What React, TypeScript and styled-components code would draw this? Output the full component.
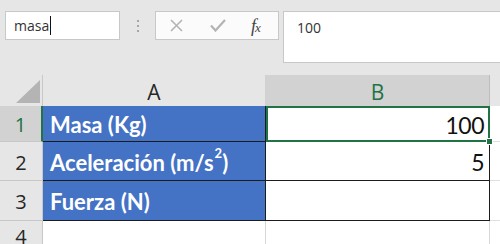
import styled, { createGlobalStyle } from "styled-components";

const GlobalStyle = createGlobalStyle`
	html, body {
		margin: 0;
		padding: 0;
		background: #e6e6e6;
		overflow: hidden;
	}
`;

const Window = styled.div`
	width: 500px;
	height: 244px;
	overflow: hidden;
	background: #e6e6e6;
	font-family: "Open Sans", "Liberation Sans", sans-serif;
	display: flex;
	flex-direction: column;
`;

const Toolbar = styled.div`
	height: 75px;
	flex-shrink: 0;
	box-sizing: border-box;
	padding: 11px 0 0 5px;
	display: flex;
	align-items: flex-start;
`;

const NameBox = styled.div`
	width: 115px;
	height: 29px;
	box-sizing: border-box;
	background: #ffffff;
	border: 1px solid #c8c8c8;
	padding-left: 8px;
	display: flex;
	align-items: center;
	font-size: 14px;
	color: #333333;
`;

const Caret = styled.span`
	display: inline-block;
	width: 1px;
	height: 19px;
	margin-left: 1px;
	background: #111111;
`;

const Grip = styled.div`
	width: 35px;
	height: 29px;
	display: flex;
	flex-direction: column;
	align-items: center;
	justify-content: center;
	gap: 3px;
`;

const Dot = styled.span`
	width: 2px;
	height: 2px;
	background: #a6a6a6;
`;

const ButtonGroup = styled.div`
	width: 124px;
	height: 29px;
	box-sizing: border-box;
	background: #fbfbfb;
	border: 1px solid #c8c8c8;
	display: flex;
	align-items: center;
	padding-left: 14px;
`;

const IconButton = styled.span<{ $w: number }>`
	width: ${(p) => p.$w}px;
	display: flex;
	align-items: center;
`;

const Fx = styled.span`
	font-family: "Liberation Serif", "DejaVu Serif", serif;
	font-style: italic;
	font-size: 18px;
	color: #444444;
	letter-spacing: -1px;
	line-height: 1;

	small {
		font-size: 13px;
	}
`;

const FormulaBar = styled.div`
	flex: 1;
	margin-left: 4px;
	height: 52px;
	box-sizing: border-box;
	background: #ffffff;
	border: 1px solid #c8c8c8;
	border-right: none;
	padding: 6px 0 0 13px;
	font-size: 14px;
	color: #333333;
`;

const Sheet = styled.div`
	flex: 1;
	display: grid;
	grid-template-columns: 43px 223px 224px 1fr;
	grid-template-rows: 31px 36px 39px 40px 1fr;
	background: #ffffff;
`;

const Corner = styled.div`
	background: #e6e6e6;
	border-right: 1px solid #c8c8c8;
	box-sizing: border-box;
	display: flex;
	justify-content: flex-end;
	align-items: flex-end;
	padding: 0 2px 3px 0;
`;

const ColHeader = styled.div<{ $active?: boolean }>`
	background: ${(p) => (p.$active ? "#d2d2d2" : "#e6e6e6")};
	color: ${(p) => (p.$active ? "#217346" : "#262626")};
	border-right: 1px solid ${(p) => (p.$active ? "#bdbdbd" : "#d0d0d0")};
	box-sizing: border-box;
	display: flex;
	align-items: center;
	justify-content: center;
	font-size: 21px;
	padding-top: 2px;
`;

const HeaderFiller = styled.div`
	background: #e6e6e6;
`;

const RowHeader = styled.div<{ $active?: boolean }>`
	background: ${(p) => (p.$active ? "#d2d2d2" : "#e6e6e6")};
	color: ${(p) => (p.$active ? "#217346" : "#262626")};
	border-right: ${(p) => (p.$active ? "2px solid #217346" : "1px solid #c8c8c8")};
	border-bottom: 1px solid #c8c8c8;
	box-sizing: border-box;
	display: flex;
	align-items: center;
	justify-content: center;
	font-size: 20px;
	padding-top: 2px;
`;

const Cell = styled.div<{ $fill?: boolean; $outlined?: boolean; $selected?: boolean }>`
	position: relative;
	box-sizing: border-box;
	background: ${(p) => (p.$fill ? "#4472c4" : "#ffffff")};
	color: ${(p) => (p.$fill ? "#ffffff" : "#111111")};
	border-right: 1px solid ${(p) => (p.$fill || p.$outlined ? "#1c1c1c" : "#d6d6d6")};
	border-bottom: 1px solid ${(p) => (p.$fill || p.$outlined ? "#1c1c1c" : "#d6d6d6")};
	display: flex;
	align-items: center;
	justify-content: ${(p) => (p.$fill ? "flex-start" : "flex-end")};
	padding: ${(p) => (p.$fill ? "2px 0 0 7px" : "2px 5px 0 0")};
	font-family: Lato, "Open Sans", sans-serif;
	font-weight: ${(p) => (p.$fill ? 700 : 400)};
	font-size: ${(p) => (p.$fill ? "22px" : "23px")};
	letter-spacing: ${(p) => (p.$fill ? "0" : "-0.5px")};

	sup {
		font-size: 13px;
		line-height: 1;
		vertical-align: 0;
		position: relative;
		top: -9px;
		margin-left: 1px;
	}

	${(p) =>
		p.$selected &&
		`
		&::after {
			content: "";
			position: absolute;
			left: 0;
			top: 0;
			right: -1px;
			bottom: -1px;
			border: 2px solid #217346;
		}
		&::before {
			content: "";
			position: absolute;
			right: -4px;
			bottom: -4px;
			width: 5px;
			height: 5px;
			background: #217346;
			border: 1px solid #ffffff;
			z-index: 2;
		}
	`}
`;

const Blank = styled.div`
	background: #ffffff;
	border-bottom: 1px solid #e0e0e0;
	box-sizing: border-box;
`;

export default function App() {
	return (
		<>
			<GlobalStyle />
			<Window>
				<Toolbar>
					<NameBox>
						masa
						<Caret />
					</NameBox>
					<Grip>
						<Dot />
						<Dot />
						<Dot />
					</Grip>
					<ButtonGroup>
						<IconButton $w={40}>
							<svg width="13" height="13" viewBox="0 0 13 13">
								<path d="M1 1 L12 12 M12 1 L1 12" stroke="#b3b3b3" strokeWidth="1.6" fill="none" />
							</svg>
						</IconButton>
						<IconButton $w={41}>
							<svg width="16" height="13" viewBox="0 0 16 13">
								<path d="M1 6.5 L5.5 11.5 L15 1" stroke="#b3b3b3" strokeWidth="2.2" fill="none" />
							</svg>
						</IconButton>
						<IconButton $w={24}>
							<Fx>
								f<small>x</small>
							</Fx>
						</IconButton>
					</ButtonGroup>
					<FormulaBar>100</FormulaBar>
				</Toolbar>
				<Sheet>
					<Corner>
						<svg width="24" height="23" viewBox="0 0 24 23">
							<polygon points="0,23 24,0 24,23" fill="#b4b4b4" />
						</svg>
					</Corner>
					<ColHeader>A</ColHeader>
					<ColHeader $active>B</ColHeader>
					<HeaderFiller />

					<RowHeader $active>1</RowHeader>
					<Cell $fill>Masa (Kg)</Cell>
					<Cell $selected>100</Cell>
					<Blank />

					<RowHeader>2</RowHeader>
					<Cell $fill>
						Aceleración (m/s<sup>2</sup>)
					</Cell>
					<Cell $outlined>5</Cell>
					<Blank />

					<RowHeader>3</RowHeader>
					<Cell $fill>Fuerza (N)</Cell>
					<Cell $outlined />
					<Blank />

					<RowHeader>4</RowHeader>
					<Cell />
					<Cell />
					<Blank />
				</Sheet>
			</Window>
		</>
	);
}
